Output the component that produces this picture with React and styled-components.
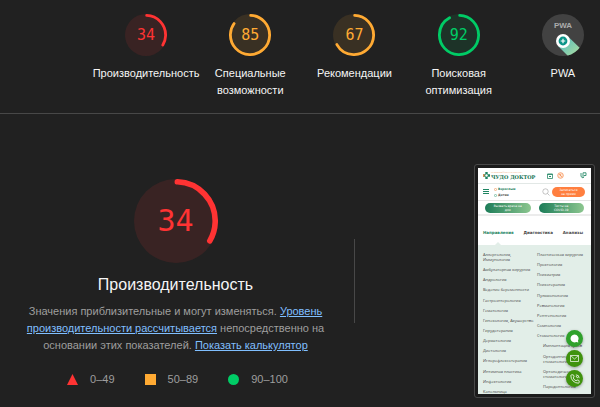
import styled, { createGlobalStyle } from "styled-components";

const GlobalStyle = createGlobalStyle`
  * { box-sizing: border-box; }
  body {
    margin: 0;
    background: #212121;
    color: #f5f5f5;
    font-family: "Liberation Sans", Arial, sans-serif;
    overflow-x: hidden;
  }
  svg { flex-shrink: 0; }
`;

const colors = { fail: "#ff3333", average: "#ffaa33", pass: "#00cc66" };

const Header = styled.header`
  padding: 14px 0 14px 94px;
  border-bottom: 1px solid #484848;
  overflow: hidden;
`;
const ScoreList = styled.nav`
  display: grid;
  grid-template-columns: repeat(5, minmax(0, 1fr));
  margin-right: -15px;
`;
const ScoreLink = styled.a`
  display: flex;
  flex-direction: column;
  align-items: center;
  gap: 9px;
  color: inherit;
  text-decoration: none;
`;
const ScoreLabel = styled.span`
  font-size: 11px;
  line-height: 17px;
  text-align: center;
`;
const GaugeBox = styled.div`
  display: grid;
  place-items: center;
  width: ${props => props.$size}px;
  height: ${props => props.$size}px;
  color: ${props => props.$color};
  > * {
    grid-area: 1 / 1;
  }
`;
const GaugeNumber = styled.span`
  font-family: "DejaVu Sans Mono", monospace;
  font-size: ${props => props.$size}px;
  line-height: 1;
`;
const Main = styled.main`
  display: grid;
  grid-template-columns: minmax(0, 1fr) 246px;
  padding-top: 50px;
`;
const Category = styled.section`
  display: flex;
  flex-direction: column;
  align-items: center;
  padding: 15px 24px 0 21px;
`;
const Title = styled.h1`
  margin: 12px 0 8px;
  font-size: 16px;
  line-height: 20px;
  font-weight: 400;
`;
const Description = styled.p`
  margin: 0;
  max-width: 304px;
  color: #9e9e9e;
  font-size: 11px;
  line-height: 17px;
  text-align: center;
`;
const TextLink = styled.a`
  color: #80bfff;
`;
const Legend = styled.ul`
  display: flex;
  gap: 30px;
  margin: 17px 0 0;
  padding: 0 0 0 4px;
  list-style: none;
  color: #9e9e9e;
  font-size: 11px;
  line-height: 17px;
`;
const LegendItem = styled.li`
  display: flex;
  align-items: center;
  gap: 12px;
`;
const Shot = styled.aside`
  display: flex;
  justify-content: space-between;
  align-items: flex-start;
  padding-right: 5px;
`;
const Separator = styled.div`
  width: 1px;
  height: 84px;
  margin-top: 75px;
  background: #484848;
`;
const Frame = styled.div`
  width: 121px;
  padding: 3px;
  border: 1px solid #484848;
  border-radius: 3px;
  background: #1b1b1b;
`;
const Screen = styled.div`
  position: relative;
  display: flex;
  flex-direction: column;
  height: 226px;
  overflow: hidden;
  background: #fff;
  color: #444;
  font-family: "Open Sans", sans-serif;
  font-size: 4px;
  line-height: 5px;
`;
const SiteTop = styled.div`
  display: flex;
  align-items: center;
  height: 16px;
  padding: 0 4px 0 5px;
  border-bottom: 1px solid #e2e8e6;
`;
const Brand = styled.div`
  display: flex;
  align-items: center;
  gap: 1px;
  margin-right: auto;
`;
const BrandText = styled.div`
  display: flex;
  flex-direction: column;
`;
const BrandNote = styled.span`
  color: #f2a56f;
  font-size: 2px;
  line-height: 3px;
`;
const BrandName = styled.strong`
  color: #12704f;
  font-family: "DejaVu Serif", serif;
  font-size: 5px;
  line-height: 6px;
`;
const TopIcons = styled.div`
  display: flex;
  align-items: center;
  gap: 4px;
  svg:last-child {
    margin-left: 12px;
  }
`;
const SiteBar = styled.div`
  display: flex;
  align-items: center;
  height: 17px;
  padding: 0 6px 0 5px;
  border-bottom: 1px solid #e4e4e4;
`;
const Audience = styled.div`
  display: flex;
  flex-direction: column;
  gap: 1px;
  margin: 0 auto 0 5px;
  font-family: "DejaVu Sans", sans-serif;
  font-size: 3px;
  font-weight: 700;
`;
const AudienceItem = styled.span`
  display: flex;
  align-items: center;
  gap: 1px;
  color: ${props => (props.$active ? "#15805b" : "#555")};
`;
const PillButton = styled.button`
  flex: ${props => (props.$orange ? "none" : 1)};
  width: 33px;
  height: 10px;
  margin: 0;
  padding: 0;
  border: 0;
  border-radius: 5px;
  background: ${props => (props.$orange ? "#ff7f3f" : "linear-gradient(90deg, #1c7c58, #8cc68f)")};
  color: #fff;
  font-family: "DejaVu Sans", sans-serif;
  font-size: 3px;
  line-height: 4px;
`;
const Actions = styled.div`
  display: flex;
  align-items: center;
  gap: 8px;
  height: 15px;
  padding: 0 7px;
  border-bottom: 2px solid #ececec;
`;
const Tabs = styled.div`
  display: flex;
  align-items: center;
  justify-content: space-between;
  height: 29px;
  padding: 4px 8px 0 5px;
  font-family: "DejaVu Sans", sans-serif;
  font-weight: 700;
`;
const Tab = styled.span`
  color: ${props => (props.$active ? "#16805b" : "#444")};
`;
const Panel = styled.div`
  position: relative;
  flex: 1;
  display: grid;
  grid-template-columns: 54px 1fr;
  padding: 7px 0 0 5px;
  background: #e2eee8;
  &::before {
    content: "";
    position: absolute;
    left: 17px;
    top: -3px;
    border: 3px solid transparent;
    border-top: 0;
    border-bottom-color: #e2eee8;
  }
`;
const Specialities = styled.ul`
  display: flex;
  flex-direction: column;
  justify-content: space-between;
  margin: 0;
  padding: 0 0 ${props => (props.$short ? 5 : 0)}px;
  list-style: none;
  white-space: pre-line;
`;
const Speciality = styled.li`
  padding-left: ${props => (props.$nested ? 6 : 0)}px;
`;
const FloatButtons = styled.div`
  position: absolute;
  right: 8px;
  bottom: 7px;
  display: flex;
  flex-direction: column;
  gap: 3px;
`;
const FloatButton = styled.button`
  display: grid;
  place-items: center;
  width: 17px;
  height: 17px;
  padding: 0;
  border: 0;
  border-radius: 50%;
  background: ${props => props.$color};
  box-shadow: 0 1px 3px rgba(0, 0, 0, 0.35);
`;

const scores = [
  { score: 34, label: "Производительность", color: colors.fail },
  { score: 85, label: "Специальные возможности", color: colors.average },
  { score: 67, label: "Рекомендации", color: colors.average },
  { score: 92, label: "Поисковая оптимизация", color: colors.pass },
];

const leftList = [
  "Аллергология,\nИммунология", "Амбулаторная хирургия", "Андрология",
  "Ведение беременности", "Гастроэнтерология", "Гематология",
  "Гинекология, Акушерство", "Гирудотерапия", "Дерматология", "Диетология",
  "Иглорефлексотерапия", "Интимная пластика", "Инфектология", "Капельница",
];

const rightList = [
  "Пластическая хирургия", "Проктология", "Психиатрия", "Психотерапия",
  "Пульмонология", "Ревматология", "Рентгенология", "Сомнология", "Стоматология",
];

const nestedList = [
  "Имплантация зубов", "Ортодонтическая\nстоматология",
  "Ортопедическая\nстоматология", "Пародонтология",
];

const Gauge = ({ score, color, size, fontSize }) => {
  const length = 2 * Math.PI * 56;
  return (
    <GaugeBox $size={size} $color={color}>
      <svg width={size} height={size} viewBox="0 0 120 120" aria-hidden="true">
        <circle cx="60" cy="60" r="60" fill={color} opacity="0.11" />
        <circle
          cx="60" cy="60" r="56" fill="none" stroke={color} strokeWidth="8"
          strokeLinecap="round" transform="rotate(-88 60 60)"
          strokeDasharray={`${(score / 100) * length - 4} ${length}`}
        />
      </svg>
      <GaugeNumber $size={fontSize}>{score}</GaugeNumber>
    </GaugeBox>
  );
};

const PwaBadge = () => (
  <svg width="42" height="42" viewBox="0 0 42 42">
    <defs>
      <clipPath id="disc"><circle cx="21" cy="21" r="21" /></clipPath>
      <linearGradient id="ray" x1="0" y1="0" x2="1" y2="1">
        <stop offset="0.25" stopColor="#6cc5b8" />
        <stop offset="0.7" stopColor="#a9dba0" />
      </linearGradient>
    </defs>
    <circle cx="21" cy="21" r="21" fill="#424242" />
    <path d="M16 32 L26 22.5 L44 40 L34 50Z" fill="url(#ray)" clipPath="url(#disc)" />
    <text x="21" y="14" textAnchor="middle" fill="#ababab" fontSize="8" fontWeight="700" fontFamily="Liberation Sans">PWA</text>
    <circle cx="21" cy="27" r="7" fill="#fff" />
    <circle cx="21" cy="27" r="4.4" fill="#0a9488" />
    <path d="M21 24.700v4.600M18.700 27h4.600" stroke="#fff" strokeWidth="1.2" />
  </svg>
);

const Dot = ({ color }) => (
  <svg width="3" height="3" viewBox="0 0 3 3">
    <circle cx="1.5" cy="1.5" r="1.1" fill="none" stroke={color} strokeWidth=".8" />
  </svg>
);

const App = () => {
  return (
    <>
      <GlobalStyle />
      <Header>
        <ScoreList>
          {scores.map(item => (
            <ScoreLink href="#" key={item.label}>
              <Gauge score={item.score} color={item.color} size={42} fontSize={15} />
              <ScoreLabel>{item.label}</ScoreLabel>
            </ScoreLink>
          ))}
          <ScoreLink href="#">
            <PwaBadge />
            <ScoreLabel>PWA</ScoreLabel>
          </ScoreLink>
        </ScoreList>
      </Header>
      <Main>
        <Category>
          <Gauge score={34} color={colors.fail} size={84} fontSize={30} />
          <Title>Производительность</Title>
          <Description>
            Значения приблизительные и могут изменяться.{" "}
            <TextLink href="#">Уровень производительности рассчитывается</TextLink>{" "}
            непосредственно на основании этих показателей.{" "}
            <TextLink href="#">Показать калькулятор</TextLink>
          </Description>
          <Legend>
            <LegendItem>
              <svg width="11" height="11" viewBox="0 0 11 11"><path d="M5.5 0L11 11H0Z" fill={colors.fail} /></svg>
              0–49
            </LegendItem>
            <LegendItem>
              <svg width="11" height="11" viewBox="0 0 11 11"><path d="M0 0h11v11H0Z" fill={colors.average} /></svg>
              50–89
            </LegendItem>
            <LegendItem>
              <svg width="11" height="11" viewBox="0 0 11 11"><circle cx="5.5" cy="5.5" r="5.5" fill={colors.pass} /></svg>
              90–100
            </LegendItem>
          </Legend>
        </Category>
        <Shot>
          <Separator />
          <Frame>
            <Screen>
              <SiteTop>
                <Brand>
                  <svg width="7" height="7" viewBox="0 0 7 7">
                    <path d="M2.3 0h2.4v2.3H7v2.4H4.7V7H2.3V4.7H0V2.3h2.3Z" fill="#1b8460" />
                    <path d="M0 2.3h1.4v2.4H0Z" fill="#f08a4b" />
                    <circle cx="3.5" cy="3.5" r="1.2" fill="#fff" />
                  </svg>
                  <BrandText>
                    <BrandNote>МНОГОПРОФИЛЬНАЯ КЛИНИКА</BrandNote>
                    <BrandName>ЧУДО ДОКТОР</BrandName>
                  </BrandText>
                </Brand>
                <TopIcons>
                  <svg width="6" height="6" viewBox="0 0 6 6" fill="none" stroke="#2b8c6b">
                    <path d="M.5 1h5v4.5h-5Z" strokeWidth=".8" />
                    <path d="M.5 1.4h5M2 3.5h2" strokeWidth="1" />
                  </svg>
                  <svg width="7" height="7" viewBox="0 0 7 7" fill="#ffe6d6" stroke="#f5965d" strokeWidth=".8">
                    <circle cx="3.5" cy="3.5" r="2.8" />
                    <path d="M2 2l3 3M3.5 2v2" />
                  </svg>
                  <svg width="7" height="7" viewBox="0 0 7 7" fill="none" stroke="#2b8c6b" strokeWidth=".9">
                    <path d="M1 1v3.5L3 6l1-1.2M3 .8h3v2.7H4L3 4.5Z" />
                  </svg>
                </TopIcons>
              </SiteTop>
              <SiteBar>
                <svg width="6" height="6" viewBox="0 0 6 6" stroke="#1f8562"><path d="M0 .5h6M0 2.500h6M0 4.500h6" strokeWidth="1" /></svg>
                <Audience>
                  <AudienceItem $active><Dot color="#f2a56f" />Взрослым</AudienceItem>
                  <AudienceItem><Dot color="#6bb89b" />Детям</AudienceItem>
                </Audience>
                <svg width="10" height="8" viewBox="0 0 10 8" fill="none" stroke="#aaa" strokeWidth=".7">
                  <circle cx="3.5" cy="3.5" r="2.7" />
                  <path d="M5.5 5.5L7.5 7.5" />
                </svg>
                <PillButton $orange>Записаться<br />на прием</PillButton>
              </SiteBar>
              <Actions>
                <PillButton>Вызвать врача на<br />дом</PillButton>
                <PillButton>Тесты на<br />COVID-19</PillButton>
              </Actions>
              <Tabs>
                <Tab $active>Направления</Tab>
                <Tab>Диагностика</Tab>
                <Tab>Анализы</Tab>
              </Tabs>
              <Panel>
                <Specialities>
                  {leftList.map(name => <Speciality key={name}>{name}</Speciality>)}
                </Specialities>
                <Specialities $short>
                  {rightList.map(name => <Speciality key={name}>{name}</Speciality>)}
                  {nestedList.map(name => <Speciality $nested key={name}>{name}</Speciality>)}
                </Specialities>
              </Panel>
              <FloatButtons>
                <FloatButton $color="#2fa12b" aria-label="Чат">
                  <svg width="9" height="9" viewBox="0 0 9 9"><path d="M4.5.5a4 4 0 1 0 1.8 7.6L8.3 8.6 8 6.5A4 4 0 0 0 4.5.5Z" fill="#fff" /></svg>
                </FloatButton>
                <FloatButton $color="#3f930d" aria-label="Почта">
                  <svg width="9" height="7" viewBox="0 0 9 7" fill="none" stroke="#fff" strokeWidth=".7"><path d="M.5.5h8v6h-8ZL4.5 4 8.5.5" /></svg>
                </FloatButton>
                <FloatButton $color="#3f930d" aria-label="Телефон">
                  <svg width="10" height="10" viewBox="0 0 24 24" fill="none" stroke="#fff" strokeWidth="2">
                    <path d="M22 17v3a2 2 0 0 1-2 2A18 18 0 0 1 2 4a2 2 0 0 1 2-2h3a2 2 0 0 1 2 2l.7 3-2 2.500a14 14 0 0 0 6.800 6.800l2.500-2 3 .7a2 2 0 0 1 2 2ZM14 2a8 8 0 0 1 8 8M14 6a4 4 0 0 1 4 4" />
                  </svg>
                </FloatButton>
              </FloatButtons>
            </Screen>
          </Frame>
        </Shot>
      </Main>
    </>
  );
};

export default App;
